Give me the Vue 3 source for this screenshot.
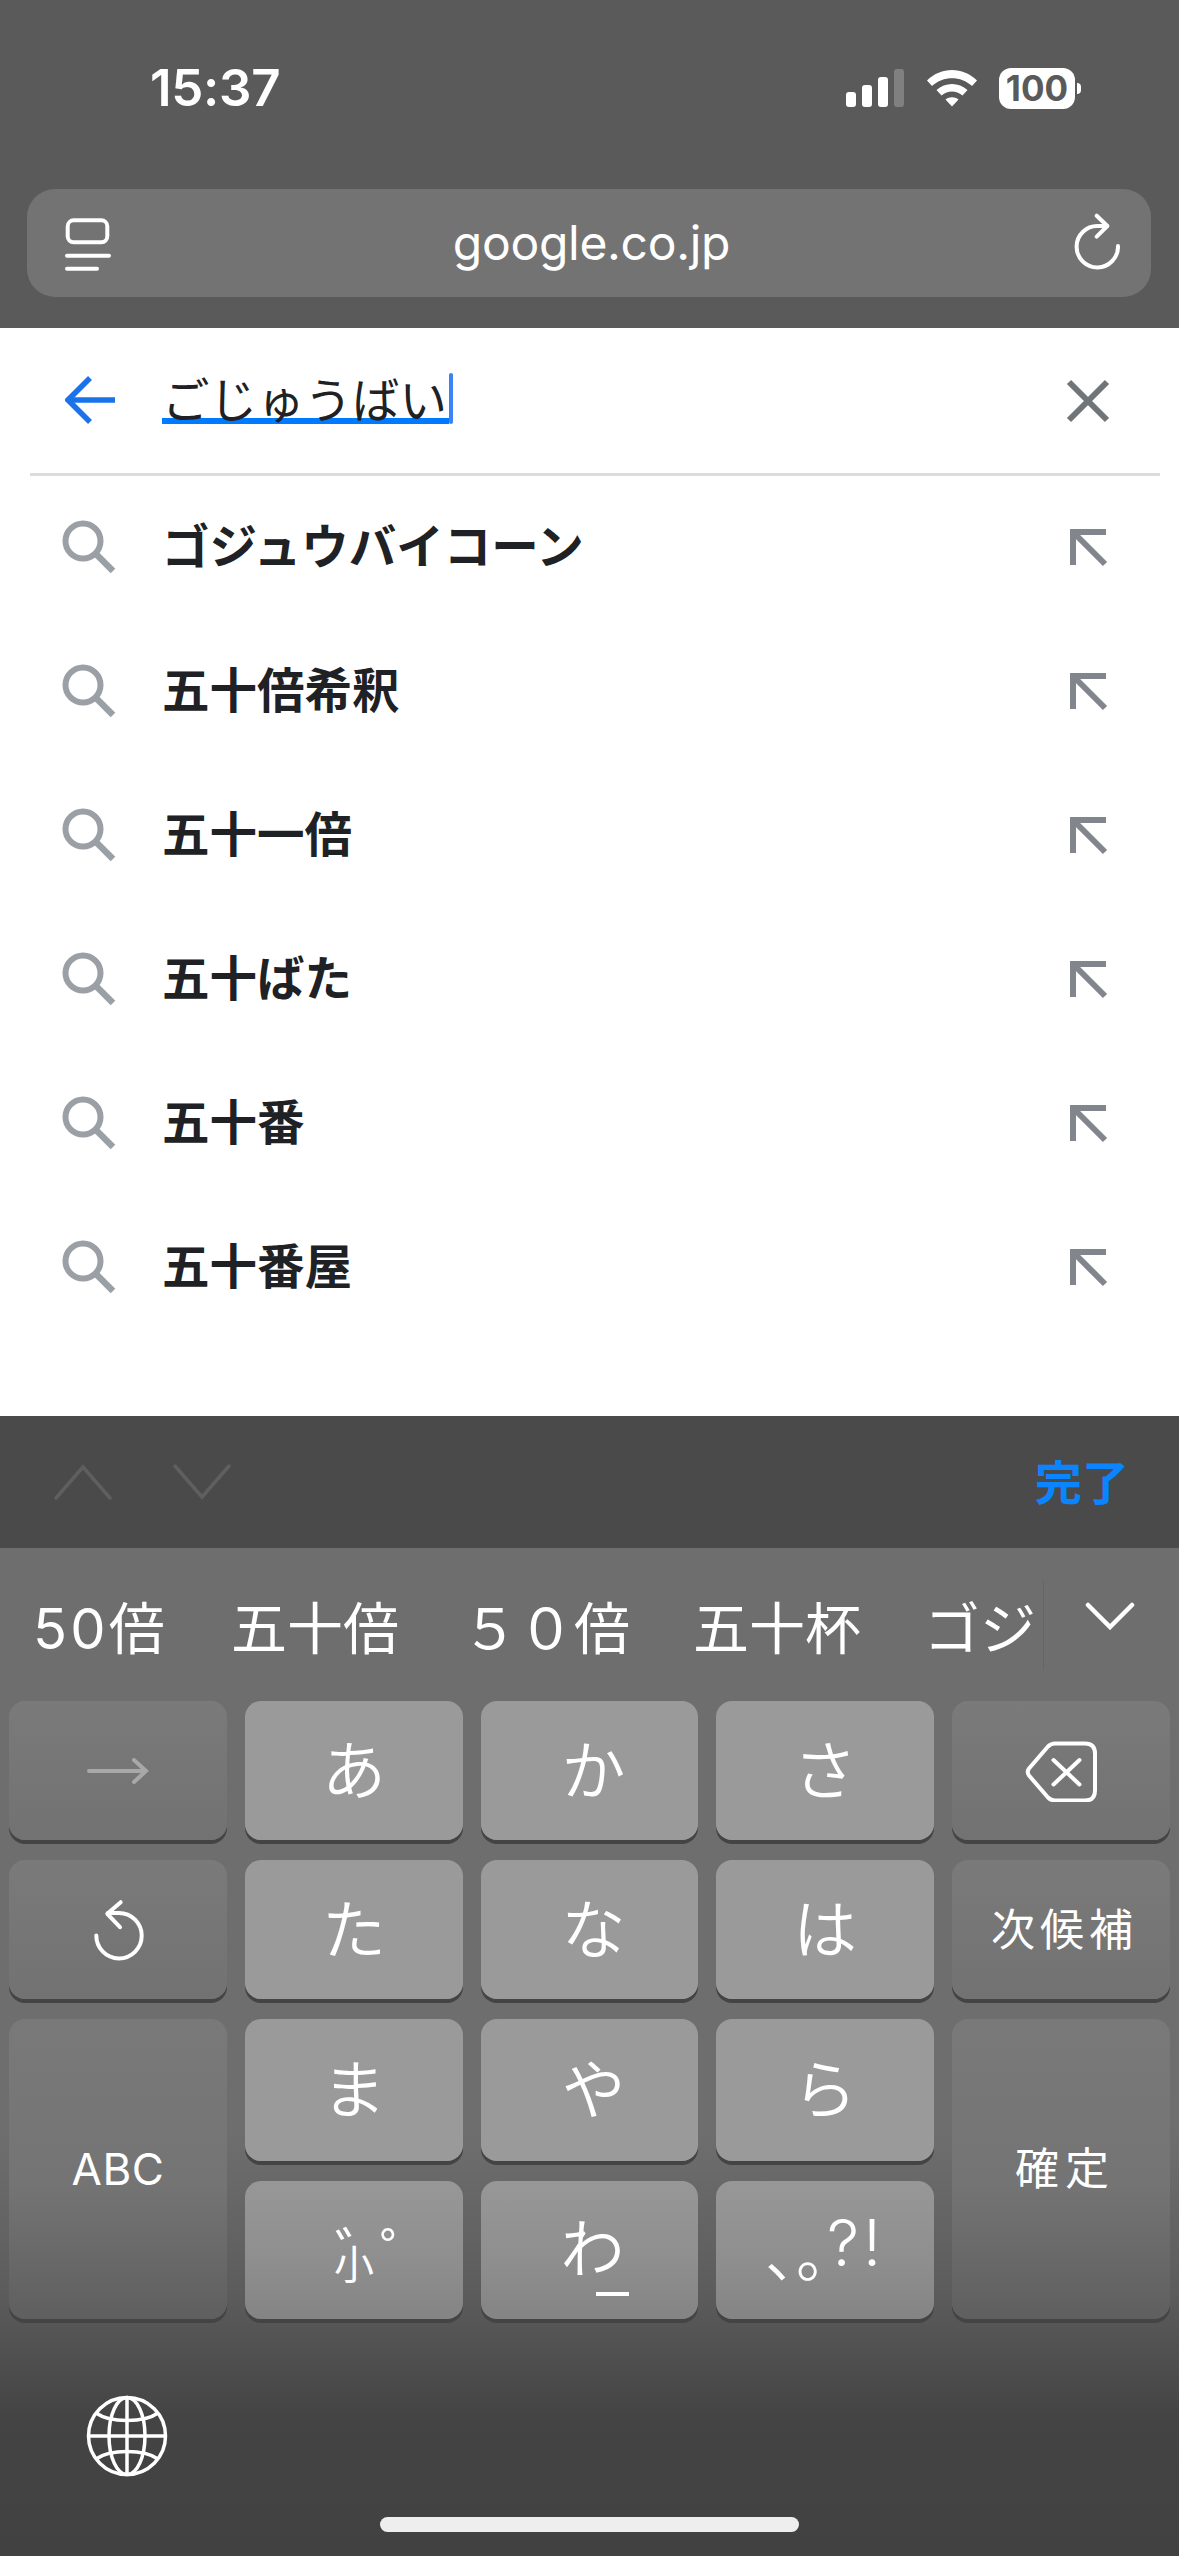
<template>
  <div class="screen">
    <header class="top">
      <div class="status">
        <span class="time">15:37</span>
        <div class="status-icons">
          <div class="signal">
            <i v-for="(h, n) in signalBars" :key="n" :class="{ off: n === 3 }" :style="{ height: h + 'px' }"></i>
          </div>
          <svg class="wifi" width="52" height="38" viewBox="0 0 52 38">
            <path d="M1 11.500C15 -2.500 37 -2.500 51 11.500L46 17C35 6.500 17 6.500 6 17Z" fill="#fff" />
            <path d="M10.500 21C19 13 33 13 41.500 21L36.500 26.500C30 21 22 21 15.500 26.500Z" fill="#fff" />
            <path d="M19.500 30.500C23 27.500 29 27.500 32.500 30.500L26 37.500Z" fill="#fff" />
          </svg>
          <div class="battery"><span>100</span></div>
          <i class="nub"></i>
        </div>
      </div>
      <div class="urlbar">
        <svg width="46" height="56" viewBox="0 0 46 56" fill="none" stroke="#fff" stroke-width="4" stroke-linecap="round">
          <rect x="2.700" y="5.300" width="39.600" height="22" rx="6" />
          <path d="M2 40.700H44M2 53.700H32" />
        </svg>
        <span class="host">google.co.jp</span>
        <svg width="48" height="60" viewBox="0 0 48 60" fill="none" stroke="#fff" stroke-width="4" stroke-linecap="round" stroke-linejoin="round">
          <path d="M35 13H26A20.700 20.700 0 1 0 46 33" />
          <path d="M24.700 2.700L35.300 13L24.700 23.700" />
        </svg>
      </div>
    </header>

    <main class="search">
      <div class="search-input">
        <svg class="back" width="50" height="48" viewBox="0 0 50 48" fill="none" stroke="#1a73e8" stroke-width="5.500">
          <path d="M50 24H5" />
          <path d="M25 2L3 24L25 46" />
        </svg>
        <div class="query"><span>ごじゅうばい</span><i class="caret"></i></div>
        <svg width="44" height="44" viewBox="0 0 44 44" stroke="#70757a" stroke-width="6">
          <path d="M3 3L41 41M41 3L3 41" />
        </svg>
      </div>
      <ul class="suggestions">
        <li v-for="s in suggestions" :key="s">
          <svg class="mag" width="54" height="54" viewBox="0 0 54 54" fill="none" stroke="#9aa0a6" stroke-width="6">
            <circle cx="21" cy="21" r="17.500" />
            <path d="M33 33L51 51" stroke-width="6.500" />
          </svg>
          <span class="term">{{ s }}</span>
          <svg width="38" height="38" viewBox="0 0 38 38" fill="none" stroke="#80868b" stroke-width="6">
            <path d="M36 3H3V36" />
            <path d="M3 3L35 35" />
          </svg>
        </li>
      </ul>
    </main>

    <div class="toolbar">
      <svg width="58" height="36" viewBox="0 0 58 36" fill="none" stroke="#5f5f5f" stroke-width="3.500" stroke-linecap="round">
        <path d="M2 34L29 3L56 34" />
      </svg>
      <svg class="down" width="58" height="36" viewBox="0 0 58 36" fill="none" stroke="#5f5f5f" stroke-width="3.500" stroke-linecap="round">
        <path d="M2 2L29 33L56 2" />
      </svg>
      <span class="done">完了</span>
    </div>

    <section class="keyboard">
      <div class="candidates">
        <div class="candidate-list">
          <span v-for="(c, n) in candidates" :key="c" :class="{ digits: n === 0 }">{{ c }}</span>
        </div>
        <div class="more">
          <svg width="50" height="28" viewBox="0 0 50 28" fill="none" stroke="#fff" stroke-width="4.500" stroke-linecap="round">
            <path d="M3 3L25 25L47 3" />
          </svg>
        </div>
      </div>

      <div class="keys">
        <button class="key dark">
          <svg width="62" height="26" viewBox="0 0 62 26" fill="none" stroke="#a8a8a8" stroke-width="4" stroke-linecap="round">
            <path d="M2 13H59M47 2L59 13L47 24" />
          </svg>
        </button>
        <button class="key">あ</button>
        <button class="key mid">か</button>
        <button class="key">さ</button>
        <button class="key dark">
          <svg width="72" height="62" viewBox="0 0 72 62" fill="none" stroke="#fff" stroke-width="4" stroke-linejoin="round">
            <path d="M30 3.500H60Q70 3.500 70 13.500V50.500Q70 60.500 60 60.500H30Q26 60.500 23 57.500L4 35.500Q1.500 32 4 28.500L23 6.500Q26 3.500 30 3.500Z" />
            <path d="M28.500 20L54.500 44.500M54.500 20L28.500 44.500" stroke-linecap="round" />
          </svg>
        </button>

        <button class="key dark">
          <svg width="52" height="62" viewBox="0 0 52 62" fill="none" stroke="#fff" stroke-width="4" stroke-linecap="round" stroke-linejoin="round">
            <path d="M16 14H27A22.700 22.700 0 1 1 4.300 36.500" />
            <path d="M28.700 3.200L15.300 14.800L28 28.200" />
          </svg>
        </button>
        <button class="key">た</button>
        <button class="key mid">な</button>
        <button class="key">は</button>
        <button class="key dark small wide">次候補</button>

        <button class="key dark tall small abc">ABC</button>
        <button class="key">ま</button>
        <button class="key mid">や</button>
        <button class="key">ら</button>
        <button class="key dark tall small wider">確定</button>

        <button class="key low dakuten">
          <span class="marks">゛゜</span>
          <span class="sm">小</span>
        </button>
        <button class="key low wa">わ<i></i></button>
        <button class="key low punct"><span class="jp-punct">、。</span><span class="latin-punct">?!</span></button>
      </div>

      <div class="globe-row">
        <svg width="82" height="82" viewBox="0 0 82 82" fill="none" stroke="#fff" stroke-width="3.500">
          <circle cx="41" cy="41" r="38.500" />
          <ellipse cx="41" cy="41" rx="18" ry="38.500" />
          <path d="M41 2.500V79.500M2.500 41H79.500" />
          <path d="M10 18C24 28 58 28 72 18M10 64C24 54 58 54 72 64" />
        </svg>
      </div>
      <div class="home-bar"></div>
    </section>
  </div>
</template>

<script setup>
const signalBars = [15, 22, 30, 38]

const suggestions = [
  'ゴジュウバイコーン',
  '五十倍希釈',
  '五十一倍',
  '五十ばた',
  '五十番',
  '五十番屋',
]

const candidates = ['50倍', '五十倍', '５０倍', '五十杯', 'ゴジ']
</script>

<style>
html,
body {
  margin: 0;
  background: #5a5a5a;
}
</style>

<style scoped>
.screen {
  width: 1179px;
  height: 2556px;
  display: flex;
  flex-direction: column;
  overflow: hidden;
  font-family: "Noto Sans CJK JP", sans-serif;
}

.top {
  height: 328px;
  box-sizing: border-box;
  background: #5a5a5a;
  padding-top: 60px;
}
.status {
  height: 56px;
  display: flex;
  justify-content: space-between;
  align-items: center;
  padding: 0 98px 0 150px;
  color: #fff;
}
.time {
  font: 600 51px/60px Inter, sans-serif;
  letter-spacing: -0.3px;
}
.status-icons {
  display: flex;
  align-items: center;
}
.signal {
  display: flex;
  align-items: flex-end;
  gap: 6px;
  height: 38px;
  margin-right: 22px;
}
.signal i {
  width: 10px;
  background: #fff;
  border-radius: 3px;
}
.signal i.off {
  background: #808080;
}
.wifi {
  margin-right: 21px;
}
.battery {
  width: 76px;
  height: 41px;
  background: #fff;
  border-radius: 12px;
  display: flex;
  justify-content: center;
  align-items: center;
}
.battery span {
  font: 700 35px/41px Inter, sans-serif;
  color: #5a5a5a;
}
.nub {
  width: 4px;
  height: 11px;
  margin-left: 2px;
  background: #fff;
  border-radius: 0 4px 4px 0;
}

.urlbar {
  margin: 73px 28px 0 27px;
  height: 108px;
  background: #737373;
  border-radius: 28px;
  display: flex;
  justify-content: space-between;
  align-items: center;
  padding: 0 31px 0 38px;
}
.host {
  font: 400 48px/60px Inter, sans-serif;
  color: #fff;
  letter-spacing: -0.3px;
}

.search {
  height: 1088px;
  background: #fff;
}
.search-input {
  height: 145px;
  margin-left: 30px;
  margin-right: 19px;
  border-bottom: 3px solid #dadce0;
  display: flex;
  align-items: center;
  padding: 0 50px 0 35px;
}
.back {
  margin-right: 48px;
  margin-top: -2px;
}
.query {
  flex: 1;
  display: flex;
  align-items: flex-end;
  height: 50px;
  margin-top: -4px;
  margin-left: -1px;
}
.query span {
  font-size: 47.500px;
  line-height: 50px;
  color: #202124;
  border-bottom: 6px solid #007aff;
  height: 45px;
  padding-right: 2px;
}
.caret {
  width: 4px;
  height: 51px;
  background: #3b82f6;
  border-radius: 2px;
}

.suggestions {
  list-style: none;
  margin: 0;
  padding: 0;
}
.suggestions li {
  height: 144px;
  display: flex;
  align-items: center;
  padding: 0 71px 0 62px;
}
.mag {
  margin-top: -2px;
}
.term {
  flex: 1;
  margin-left: 46px;
  margin-top: -9px;
  font-size: 47.500px;
  font-weight: 700;
  color: #202124;
}

.toolbar {
  height: 132px;
  background: #4a4a4a;
  display: flex;
  align-items: center;
  padding: 0 50px 0 54px;
}
.down {
  margin-left: 61px;
}
.done {
  margin-left: auto;
  margin-top: -5px;
  font-size: 47px;
  font-weight: 700;
  color: #0a84ff;
}

.keyboard {
  flex: 1;
  position: relative;
  background: linear-gradient(#6e6e6e 0, #6e6e6e 58%, #5c5c5c 74%, #444 86%, #414141 100%);
}
.candidates {
  height: 153px;
  display: flex;
  align-items: center;
}
.candidate-list {
  width: 1010px;
  height: 90px;
  padding-left: 33px;
  display: flex;
  align-items: center;
  gap: 63px;
  overflow: hidden;
  border-right: 1px solid #666;
  font-size: 56px;
  color: #fff;
  white-space: nowrap;
}
.digits {
  font-family: Inter, "Noto Sans CJK JP", sans-serif;
  letter-spacing: 3.200px;
}
.more {
  flex: 1;
  display: flex;
  justify-content: center;
  align-self: flex-start;
  padding: 54px 3px 0 0;
}

.keys {
  display: grid;
  grid-template-columns: 218px 218px 217px 218px 218px;
  grid-template-rows: 139px 139px 142px 138px;
  column-gap: 18px;
  row-gap: 20px;
  padding-left: 9px;
}
.key {
  border: 0;
  padding: 0 0 10px;
  border-radius: 16px;
  background: linear-gradient(#9a9a9a, #9a9a9a);
  box-shadow: 0 4px 0 #444;
  color: #fff;
  font-family: "Noto Sans CJK JP", sans-serif;
  font-size: 64px;
  font-weight: 350;
  display: flex;
  align-items: center;
  justify-content: center;
}
.key.mid {
  padding-left: 8px;
}
.key.dark {
  padding: 0;
  background: linear-gradient(#7a7a7a, #727272);
}
.key.tall {
  grid-row: span 2;
  background: linear-gradient(#797979 0, #747474 55%, #5f5f5f 100%);
}
.key.low {
  background: linear-gradient(#979797 0, #8f8f8f 55%, #848484 100%);
}
.key.small {
  font-size: 44px;
  font-weight: 400;
}
.key.wide {
  letter-spacing: 5px;
  padding: 0 0 6px 7px;
}
.key.wider {
  letter-spacing: 6px;
  padding: 0 0 6px 8px;
}
.key.abc {
  font-family: Inter, sans-serif;
  letter-spacing: 0.5px;
}
.key.dakuten {
  flex-direction: column;
  line-height: 1;
  font-weight: 400;
  padding-bottom: 8px;
}
.marks {
  font-size: 56px;
  height: 22px;
  letter-spacing: -11px;
  margin-top: 12px;
  padding-left: 52px;
  text-spacing-trim: space-all;
}
.sm {
  font-size: 40px;
  margin-top: -2px;
}
.key.wa {
  position: relative;
  padding: 0 0 12px 6px;
}
.wa i {
  position: absolute;
  left: 115px;
  bottom: 23px;
  width: 33px;
  height: 4px;
  background: #fff;
}
.key.punct {
  padding: 0;
}
.jp-punct {
  font-size: 60px;
  letter-spacing: -29px;
  text-spacing-trim: space-all;
}
.latin-punct {
  font: 300 64px/1 Inter, sans-serif;
  letter-spacing: 4px;
  margin-bottom: 14px;
}

.globe-row {
  padding: 76px 0 0 86px;
}
.home-bar {
  position: absolute;
  left: 380px;
  right: 380px;
  bottom: 24px;
  height: 15px;
  border-radius: 8px;
  background: #eee;
}
</style>
